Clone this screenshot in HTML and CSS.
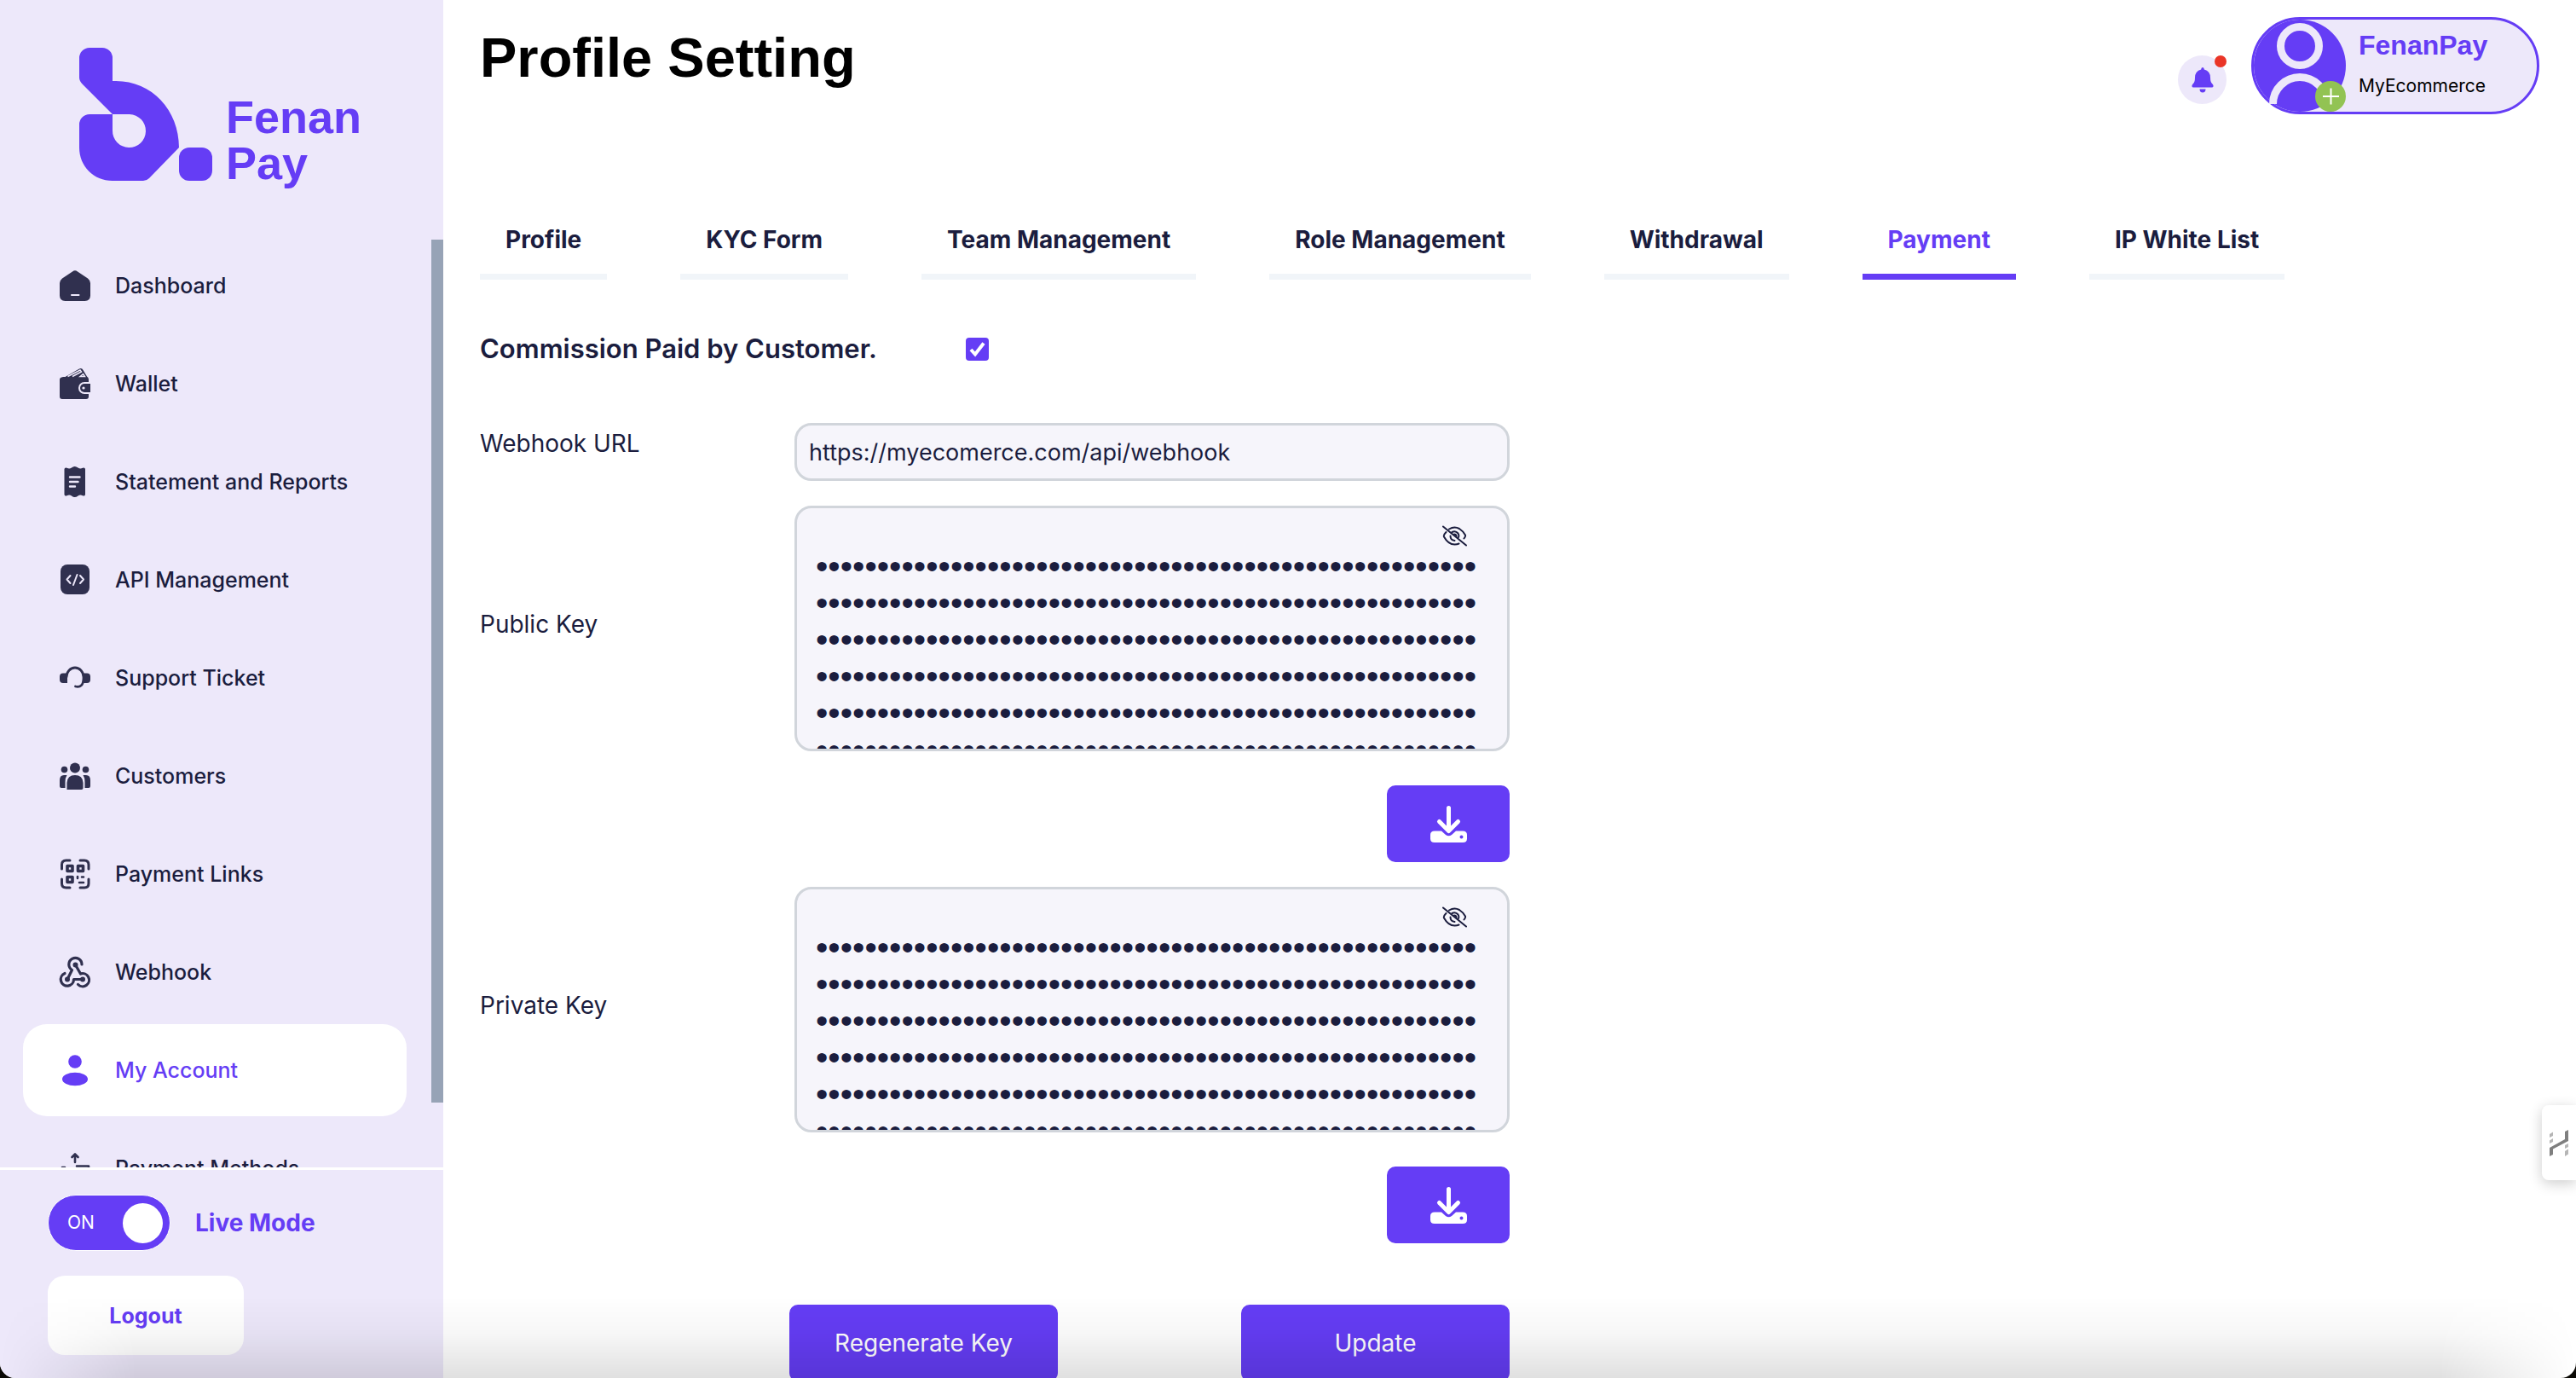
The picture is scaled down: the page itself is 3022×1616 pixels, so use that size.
FILE: index.html
```html
<!DOCTYPE html>
<html lang="en">
<head>
<meta charset="utf-8">
<meta name="viewport" content="width=device-width, initial-scale=1">
<title>FenanPay - Profile Setting</title>
<link rel="stylesheet" href="styles.css">
</head>
<body>
<div class="app">
  <aside class="sidebar">
    <a class="logo" href="#" aria-label="Fenan Pay">
      <svg class="logo-mark" viewBox="0 0 156 156" aria-hidden="true">
        <path fill="currentColor" fill-rule="evenodd" d="M12 0H27A12 12 0 0 1 39 12V39H43C85 39 117 73 117 117L82 153Q79 156 75 156H39C17 156 0 139 0 117V90A12 12 0 0 1 12 78H39L4 43Q0 39 0 35V12A12 12 0 0 1 12 0ZM39 78V97A19.500 19.500 0 1 0 59 78Z"/>
        <rect fill="currentColor" x="117" y="117" width="39" height="39" rx="12"/>
      </svg>
      <span class="logo-text">Fenan<br>Pay</span>
    </a>
    <div class="nav-area">
      <nav class="nav">
        <a class="nav-item" href="#"><svg class="nav-icon" viewBox="0 0 36 36"><path fill="currentColor" d="M15 1.500Q18-.8 21 1.500L33 9.500Q36 12 36 15V29.500Q36 36 29.500 36H6.500Q0 36 0 29.500V15Q0 12 3 9.500Z"/><path stroke="#ede8fa" stroke-width="2" stroke-linecap="round" d="M14 29H22.500"/></svg>Dashboard</a>
        <a class="nav-item" href="#"><svg class="nav-icon" viewBox="0 0 36 36"><path fill="currentColor" d="M4 10H6.500L23 .5Q26-.8 27.500 2L32 9.500Q34 10.500 34 13V16H29A7 7 0 0 0 29 30H34V33Q34 36 31 36H3Q0 36 0 33V13Q0 10.500 4 10Z"/><path fill="none" stroke="#ede8fa" stroke-width="1.500" d="M9.500 9.500L24 2L25.500 4L15 9.500M24 9.500L27.500 6.500L29.500 9.500Z"/><path fill="currentColor" d="M29 18H36V28H29A5 5 0 0 1 29 18Z"/><circle cx="28" cy="23" r="1.600" fill="#ede8fa"/></svg>Wallet</a>
        <a class="nav-item" href="#"><svg class="nav-icon" viewBox="0 0 36 36"><path fill="currentColor" d="M5.500 3Q6 .8 8.500 1.800Q11.500 3.200 14 1.500Q17.500-1.500 21.500 1.500Q24 3.200 27 1.800Q29.500 .8 30 3V33Q29.500 35.200 27 34.200Q24 32.800 21.500 34.500Q17.500 37.500 14 34.500Q11.500 32.800 8.500 34.200Q6 35.200 5.500 33Z"/><path stroke="#ede8fa" stroke-width="2.400" stroke-linecap="round" d="M12 12.500H23.500M12 18H21.500M12 23.500H18"/></svg>Statement and Reports</a>
        <a class="nav-item" href="#"><svg class="nav-icon" viewBox="0 0 36 36"><rect x="1" y="0" width="34" height="35" rx="8" fill="currentColor"/><path fill="none" stroke="#ede8fa" stroke-width="2" stroke-linecap="round" stroke-linejoin="round" d="M12.500 13L8.500 17.500L12.500 22M20.500 12L16 24M24 13L28 17.500L24 22"/></svg>API Management</a>
        <a class="nav-item" href="#"><svg class="nav-icon" viewBox="0 0 36 36"><path fill="currentColor" d="M9 12.500V24H4Q0 24 0 20V16.500Q0 12.500 4 12.500ZM27 12.500V24H32Q36 24 36 20V16.500Q36 12.500 32 12.500Z"/><path fill="none" stroke="currentColor" stroke-width="2.800" stroke-linecap="round" d="M8 17A10 11 0 0 1 28 17V19Q27.500 30 18.500 28"/></svg>Support Ticket</a>
        <a class="nav-item" href="#"><svg class="nav-icon" viewBox="0 0 36 36"><g fill="currentColor"><circle cx="18" cy="8.500" r="6"/><circle cx="5.500" cy="10.500" r="3.800"/><circle cx="30.500" cy="10.500" r="3.800"/><path d="M8.500 34V26Q9 17 18 17T27.500 26V32Q27.500 34 25.500 34H10.500ZM2 32Q0 32 0 30V23Q0 17 5 17H8.500Q6.500 20 6.500 25V32ZM34 32Q36 32 36 30V23Q36 17 31 17H27.500Q29.500 20 29.500 25V32Z"/></g></svg>Customers</a>
        <a class="nav-item" href="#"><svg class="nav-icon" viewBox="0 0 36 36"><path fill="none" stroke="currentColor" stroke-width="3" stroke-linecap="round" d="M2.500 12V7Q2.500 2 7.500 2H12M24 2H29Q34 2 34 7V12M34 24V29Q34 34 29 34H24M12 34H7.500Q2.500 34 2.500 29V24"/><path fill="none" stroke="currentColor" stroke-width="3.600" stroke-linejoin="round" d="M9 8.500H15V14.500H9ZM21.500 8.500H27.500V14.500H21.500ZM9 21.500H15V27.500H9Z"/><path fill="none" stroke="currentColor" stroke-width="2.600" stroke-linecap="round" d="M21 21V23M26 21.500H28M23 28H28"/></svg>Payment Links</a>
        <a class="nav-item" href="#"><svg class="nav-icon" viewBox="0 0 36 36"><g fill="none" stroke="currentColor" stroke-width="3.200" stroke-linecap="round" stroke-linejoin="round"><path d="M26 9A7.600 7.600 0 1 0 14.500 15.500L9 26.500"/><path d="M18.500 9.500L24.500 20A7.600 7.600 0 1 1 21.500 32.500"/><path d="M6 19.500A7.600 7.600 0 1 0 16.500 26.500H27"/></g><g fill="currentColor"><circle cx="18.500" cy="9.500" r="3"/><circle cx="9" cy="26.500" r="3"/><circle cx="27" cy="26.500" r="3"/></g></svg>Webhook</a>
        <a class="nav-item active" href="#" aria-current="page"><svg class="nav-icon" viewBox="0 0 36 36"><circle cx="18" cy="8" r="7.800" fill="currentColor"/><ellipse cx="18" cy="28.500" rx="15" ry="7.800" fill="currentColor"/></svg>My Account</a>
        <a class="nav-item" href="#"><svg class="nav-icon" viewBox="0 0 36 36"><path fill="none" stroke="currentColor" stroke-width="2.600" stroke-linecap="round" stroke-linejoin="round" d="M18 11V2M14.500 5L18 1.500L21.500 5M3 17H6M20 15.500H34V26H3V17"/></svg>Payment Methods</a>
      </nav>
      <div class="nav-scroll"></div>
    </div>
    <div class="sidebar-foot">
      <div class="mode">
        <label class="switch" for="live"><input type="checkbox" id="live" role="switch" checked aria-label="Live Mode"><span class="switch-text">ON</span><span class="switch-knob"></span></label>
        <span class="mode-name">Live Mode</span>
      </div>
      <button class="logout" type="button">Logout</button>
    </div>
  </aside>

  <main class="main">
    <header class="header">
      <h1 class="title">Profile Setting</h1>
      <div class="user-area">
        <button class="bell" type="button" aria-label="Notifications">
          <svg class="bell-icon" viewBox="0 0 26 30"><path fill="currentColor" d="M13 0Q14.800 0 14.800 2.500Q22 4.500 22 12Q22 17.500 24.500 19.500Q26 21 25.500 22.500Q25 23.500 24 23.500H2Q1 23.500 .5 22.500Q0 21 1.500 19.500Q4 17.500 4 12Q4 4.500 11.200 2.500Q11.200 0 13 0ZM9.500 25.500H16.500Q16.500 29.500 13 29.500T9.500 25.500Z"/></svg>
          <span class="bell-dot"></span>
        </button>
        <div class="account">
          <svg class="avatar" viewBox="0 0 108 108" aria-hidden="true">
            <circle cx="54" cy="54" r="54" fill="#653df5"/>
            <g fill="none" stroke="#ede8fa" stroke-width="9"><circle cx="54" cy="31" r="22.500"/><path d="M22.500 99A31.500 31.500 0 0 1 85.500 99"/></g>
            <circle cx="90" cy="90" r="18" fill="#92c353"/>
            <path stroke="#fff" stroke-width="2" d="M81 90H100M90.500 80.500V99.500"/>
          </svg>
          <div class="account-text">
            <strong class="account-name">FenanPay</strong>
            <span class="account-shop">MyEcommerce</span>
          </div>
        </div>
      </div>
    </header>

    <nav class="tabs" aria-label="Profile sections">
      <a class="tab" href="#">Profile</a>
      <a class="tab" href="#">KYC Form</a>
      <a class="tab" href="#">Team Management</a>
      <a class="tab" href="#">Role Management</a>
      <a class="tab" href="#">Withdrawal</a>
      <a class="tab current" href="#" aria-current="page">Payment</a>
      <a class="tab" href="#">IP White List</a>
    </nav>

    <form class="form">
      <div class="commission">
        <label class="commission-label" for="commission">Commission Paid by Customer.</label>
        <span class="tick"><input class="tick-box" type="checkbox" id="commission" checked><svg class="tick-mark" viewBox="0 0 27 27" aria-hidden="true"><path fill="none" stroke="#fff" stroke-width="4" d="M6 14L11 19.500L21 6.500"/></svg></span>
      </div>

      <div class="row row-top">
        <label class="label" for="webhook">Webhook URL</label>
        <input class="field" type="text" id="webhook" value="https://myecomerce.com/api/webhook">
      </div>

      <div class="row">
        <label class="label" for="public-key">Public Key</label>
        <div class="key">
          <textarea class="field key-text" id="public-key" readonly>••••••••••••••••••••••••••••••••••••••••••••••••••••••
••••••••••••••••••••••••••••••••••••••••••••••••••••••
••••••••••••••••••••••••••••••••••••••••••••••••••••••
••••••••••••••••••••••••••••••••••••••••••••••••••••••
••••••••••••••••••••••••••••••••••••••••••••••••••••••
••••••••••••••••••••••••••••••••••••••••••••••••••••••</textarea>
          <button class="eye" type="button" aria-label="Show public key"><svg class="eye-icon" viewBox="0 0 29 25"><g fill="none" stroke="currentColor" stroke-width="2" stroke-linecap="round"><path d="M8 4.500Q14 1 20 4Q24 6.500 27 11.500Q27.500 13 25.500 15.500M4.500 8Q1 11.500 2 13.500Q7 22.500 14.500 22.500Q17.500 22.500 19.500 21.500M11.500 8Q15.500 6 18.500 9.500Q20 12 19 14M9.500 12.500Q9.500 17.500 14.500 18M14 10.500Q16.500 10.500 16.500 13"/><path d="M1 1.500L28 23.500"/></g></svg></button>
        </div>
      </div>
      <button class="btn download" type="button" aria-label="Download public key"><svg class="download-icon" viewBox="0 0 43 43"><path fill="none" stroke="#fff" stroke-width="5" stroke-linecap="round" stroke-linejoin="round" d="M21.500 2.500V27M10.500 18.500L21.500 29.500L32.500 18.500"/><path fill="#fff" fill-rule="evenodd" d="M5 29.500H13L18 34Q21.500 36.500 25 34L30 29.500H38Q43 29.500 43 34V38.500Q43 43 38 43H5Q0 43 0 38.500V34Q0 29.500 5 29.500ZM36.500 34.500A2 2 0 1 0 36.500 38.500A2 2 0 1 0 36.500 34.500Z"/></svg></button>

      <div class="row">
        <label class="label" for="private-key">Private Key</label>
        <div class="key">
          <textarea class="field key-text" id="private-key" readonly>••••••••••••••••••••••••••••••••••••••••••••••••••••••
••••••••••••••••••••••••••••••••••••••••••••••••••••••
••••••••••••••••••••••••••••••••••••••••••••••••••••••
••••••••••••••••••••••••••••••••••••••••••••••••••••••
••••••••••••••••••••••••••••••••••••••••••••••••••••••
••••••••••••••••••••••••••••••••••••••••••••••••••••••</textarea>
          <button class="eye" type="button" aria-label="Show private key"><svg class="eye-icon" viewBox="0 0 29 25"><g fill="none" stroke="currentColor" stroke-width="2" stroke-linecap="round"><path d="M8 4.500Q14 1 20 4Q24 6.500 27 11.500Q27.500 13 25.500 15.500M4.500 8Q1 11.500 2 13.500Q7 22.500 14.500 22.500Q17.500 22.500 19.500 21.500M11.500 8Q15.500 6 18.500 9.500Q20 12 19 14M9.500 12.500Q9.500 17.500 14.500 18M14 10.500Q16.500 10.500 16.500 13"/><path d="M1 1.500L28 23.500"/></g></svg></button>
        </div>
      </div>
      <button class="btn download" type="button" aria-label="Download private key"><svg class="download-icon" viewBox="0 0 43 43"><path fill="none" stroke="#fff" stroke-width="5" stroke-linecap="round" stroke-linejoin="round" d="M21.500 2.500V27M10.500 18.500L21.500 29.500L32.500 18.500"/><path fill="#fff" fill-rule="evenodd" d="M5 29.500H13L18 34Q21.500 36.500 25 34L30 29.500H38Q43 29.500 43 34V38.500Q43 43 38 43H5Q0 43 0 38.500V34Q0 29.500 5 29.500ZM36.500 34.500A2 2 0 1 0 36.500 38.500A2 2 0 1 0 36.500 34.500Z"/></svg></button>

      <div class="actions">
        <button class="btn wide" type="button">Regenerate Key</button>
        <button class="btn wide" type="submit">Update</button>
      </div>
    </form>
  </main>

  <button class="widget" type="button" aria-label="Open helper"><svg class="widget-icon" viewBox="0 0 22 31"><path fill="#7f7f7f" d="M0 21L18 11V2L22 0V13L4 22.500V29L0 31Z"/><path fill="#b5b5b5" d="M0 5L4 2.500V7L0 9ZM0 12.500L4 10V14L0 16ZM18 18L22 16V20L18 22ZM18 25L22 22.500V28.500L18 31Z"/></svg></button>
  <div class="shade"></div>
</div>
</body>
</html>
```
FILE: styles.css
```css
:root {
  --brand: #653df5;
  --ink: #1b1d3e;
  --lilac: #ede8fa;
  --line: #d1d5db;
  --ui: Inter, "Liberation Sans", sans-serif;
  --display: "Liberation Sans", Arial, sans-serif;
}

* { box-sizing: border-box; }

html { background: #0b0a05; }

body {
  margin: 0;
  font: 27px/42px var(--ui);
  color: var(--ink);
}

a { color: inherit; text-decoration: none; }

button, input, textarea { font: inherit; color: inherit; }

button { border: 0; padding: 0; cursor: pointer; }

svg { display: block; }

.app {
  position: relative;
  display: grid;
  grid-template-columns: 520px 1fr;
  grid-template-rows: minmax(0, 1fr);
  height: 100vh;
  overflow: hidden;
  background: #fff;
  border-radius: 0 0 18px 18px;
}

/* Sidebar */
.sidebar {
  display: flex;
  flex-direction: column;
  min-height: 0;
  background: var(--lilac);
}

.logo {
  display: flex;
  align-items: flex-end;
  gap: 16px;
  padding: 56px 0 69px 93px;
  color: var(--brand);
}

.logo-mark { width: 156px; height: 156px; }

.logo-text {
  font: bold 54px/54px var(--display);
  margin-bottom: -6px;
}

.nav-area {
  flex: 1;
  display: flex;
  min-height: 0;
  overflow: hidden;
}

.nav {
  flex: 1;
  display: flex;
  flex-direction: column;
  gap: 7px;
  padding: 0 29px 0 27px;
}

.nav-item {
  flex: none;
  display: flex;
  align-items: center;
  gap: 29px;
  height: 108px;
  padding-left: 43px;
  border-radius: 28px;
  font-size: 25px;
  font-weight: 500;
}

.nav-item.active { background: #fff; color: var(--brand); }

.nav-icon { width: 36px; height: 36px; color: #30304f; overflow: visible; }

.active .nav-icon { color: var(--brand); }

.nav-scroll { width: 14px; height: 93%; background: #97a3b6; }

.sidebar-foot {
  padding: 29px 56px 27px;
  border-top: 3px solid #fff;
}

.mode { display: flex; align-items: center; gap: 29px; margin-bottom: 29px; }

.switch {
  display: flex;
  align-items: center;
  justify-content: space-between;
  width: 144px;
  height: 66px;
  padding: 0 8px 0 22px;
  border: 1px solid #fff;
  border-radius: 33px;
  background: var(--brand);
  color: #fff;
  font-size: 21px;
}

.switch input { position: absolute; opacity: 0; }

.switch-knob { width: 47px; height: 47px; border-radius: 50%; background: #fff; }

.mode-name { font-size: 28px; font-weight: 700; color: var(--brand); }

.logout {
  display: block;
  width: 230px;
  height: 93px;
  border-radius: 20px;
  background: #fff;
  color: var(--brand);
  font-size: 25px;
  font-weight: 700;
}

/* Page header */
.main { min-width: 0; padding: 20px 43px 0; overflow: hidden; }

.header {
  display: flex;
  justify-content: space-between;
  align-items: flex-start;
  margin-bottom: 126px;
}

.title {
  margin: 8px 0 0;
  font: bold 65px/80px var(--display);
  color: #000;
}

.user-area { display: flex; align-items: flex-end; gap: 29px; }

.bell {
  position: relative;
  display: grid;
  place-items: center;
  width: 57px;
  height: 57px;
  margin-bottom: 12px;
  border-radius: 50%;
  background: var(--lilac);
  color: var(--brand);
}

.bell-icon { width: 26px; height: 30px; }

.bell-dot {
  position: absolute;
  top: 0;
  right: 0;
  width: 14px;
  height: 14px;
  border-radius: 50%;
  background: #ea3527;
}

.account {
  display: flex;
  align-items: center;
  gap: 15px;
  width: 338px;
  border: 3px solid var(--brand);
  border-radius: 57px;
  background: var(--lilac);
}

.avatar { width: 108px; height: 108px; }

.account-text { display: flex; flex-direction: column; gap: 10px; }

.account-name { font: bold 32px/38px var(--display); color: var(--brand); }

.account-shop { font-size: 21px; line-height: 38px; color: #000; }

/* Tabs */
.tabs { display: flex; gap: 86px; }

.tab {
  padding: 0 30px 19px;
  border-bottom: 7px solid #f1f5f9;
  font-size: 28px;
  font-weight: 700;
  white-space: nowrap;
}

.tab.current { color: var(--brand); border-color: var(--brand); }

/* Payment form */
.form {
  display: flex;
  flex-direction: column;
  max-width: 1208px;
  padding-top: 57px;
}

.commission {
  display: grid;
  grid-template-columns: 570px auto;
  justify-content: start;
  align-items: center;
  margin-bottom: 63px;
}

.commission-label { font-size: 31px; line-height: 48px; font-weight: 600; }

.tick { position: relative; width: 27px; height: 27px; }

.tick-box {
  appearance: none;
  display: block;
  width: 27px;
  height: 27px;
  margin: 0;
  border-radius: 4px;
  background: var(--brand);
}

.tick-mark { position: absolute; inset: 0; pointer-events: none; }

.row {
  display: grid;
  grid-template-columns: 369px 1fr;
  align-items: center;
}

.row-top { align-items: start; margin-bottom: 29px; }

.label { padding-bottom: 10px; font-size: 28px; }

.row-top .label { padding: 3px 0; }

.field {
  display: block;
  width: 100%;
  height: 68px;
  padding: 0 14px;
  border: 3px solid var(--line);
  border-radius: 20px;
  background: #f6f5fb;
  outline: 0;
}

.key { position: relative; }

.key-text {
  height: 288px;
  padding: 47px 16px 0 22px;
  overflow: hidden;
  resize: none;
  font: 41px/43px var(--display);
}

.eye {
  position: absolute;
  top: 23px;
  right: 50px;
  background: none;
}

.eye-icon { width: 29px; height: 25px; }

.btn {
  display: grid;
  place-items: center;
  height: 90px;
  border-radius: 10px;
  background: var(--brand);
  color: #fff;
  font-size: 28px;
}

.download { align-self: flex-end; width: 144px; margin: 40px 0 29px; }

.download-icon { width: 43px; height: 43px; }

.actions {
  display: flex;
  justify-content: space-between;
  margin: 43px 0 0 363px;
}

.wide { width: 315px; }

/* Helper tab docked to the right edge */
.widget {
  position: absolute;
  right: 0;
  bottom: 232px;
  display: grid;
  align-items: center;
  width: 40px;
  height: 88px;
  padding-left: 9px;
  border-radius: 8px 0 0 8px;
  background: #fff;
  box-shadow: 0 4px 16px rgba(0, 0, 0, .2);
}

.widget-icon { width: 22px; height: 31px; }

/* Soft shade along the bottom edge of the window */
.shade {
  position: absolute;
  inset: auto 0 0;
  height: 96px;
  pointer-events: none;
  background: linear-gradient(transparent, rgba(0, 0, 0, .03) 45%, rgba(0, 0, 0, .12));
  -webkit-mask-image: linear-gradient(90deg, transparent, #000 160px, #000 calc(100% - 160px), transparent);
  mask-image: linear-gradient(90deg, transparent, #000 160px, #000 calc(100% - 160px), transparent);
}
```
